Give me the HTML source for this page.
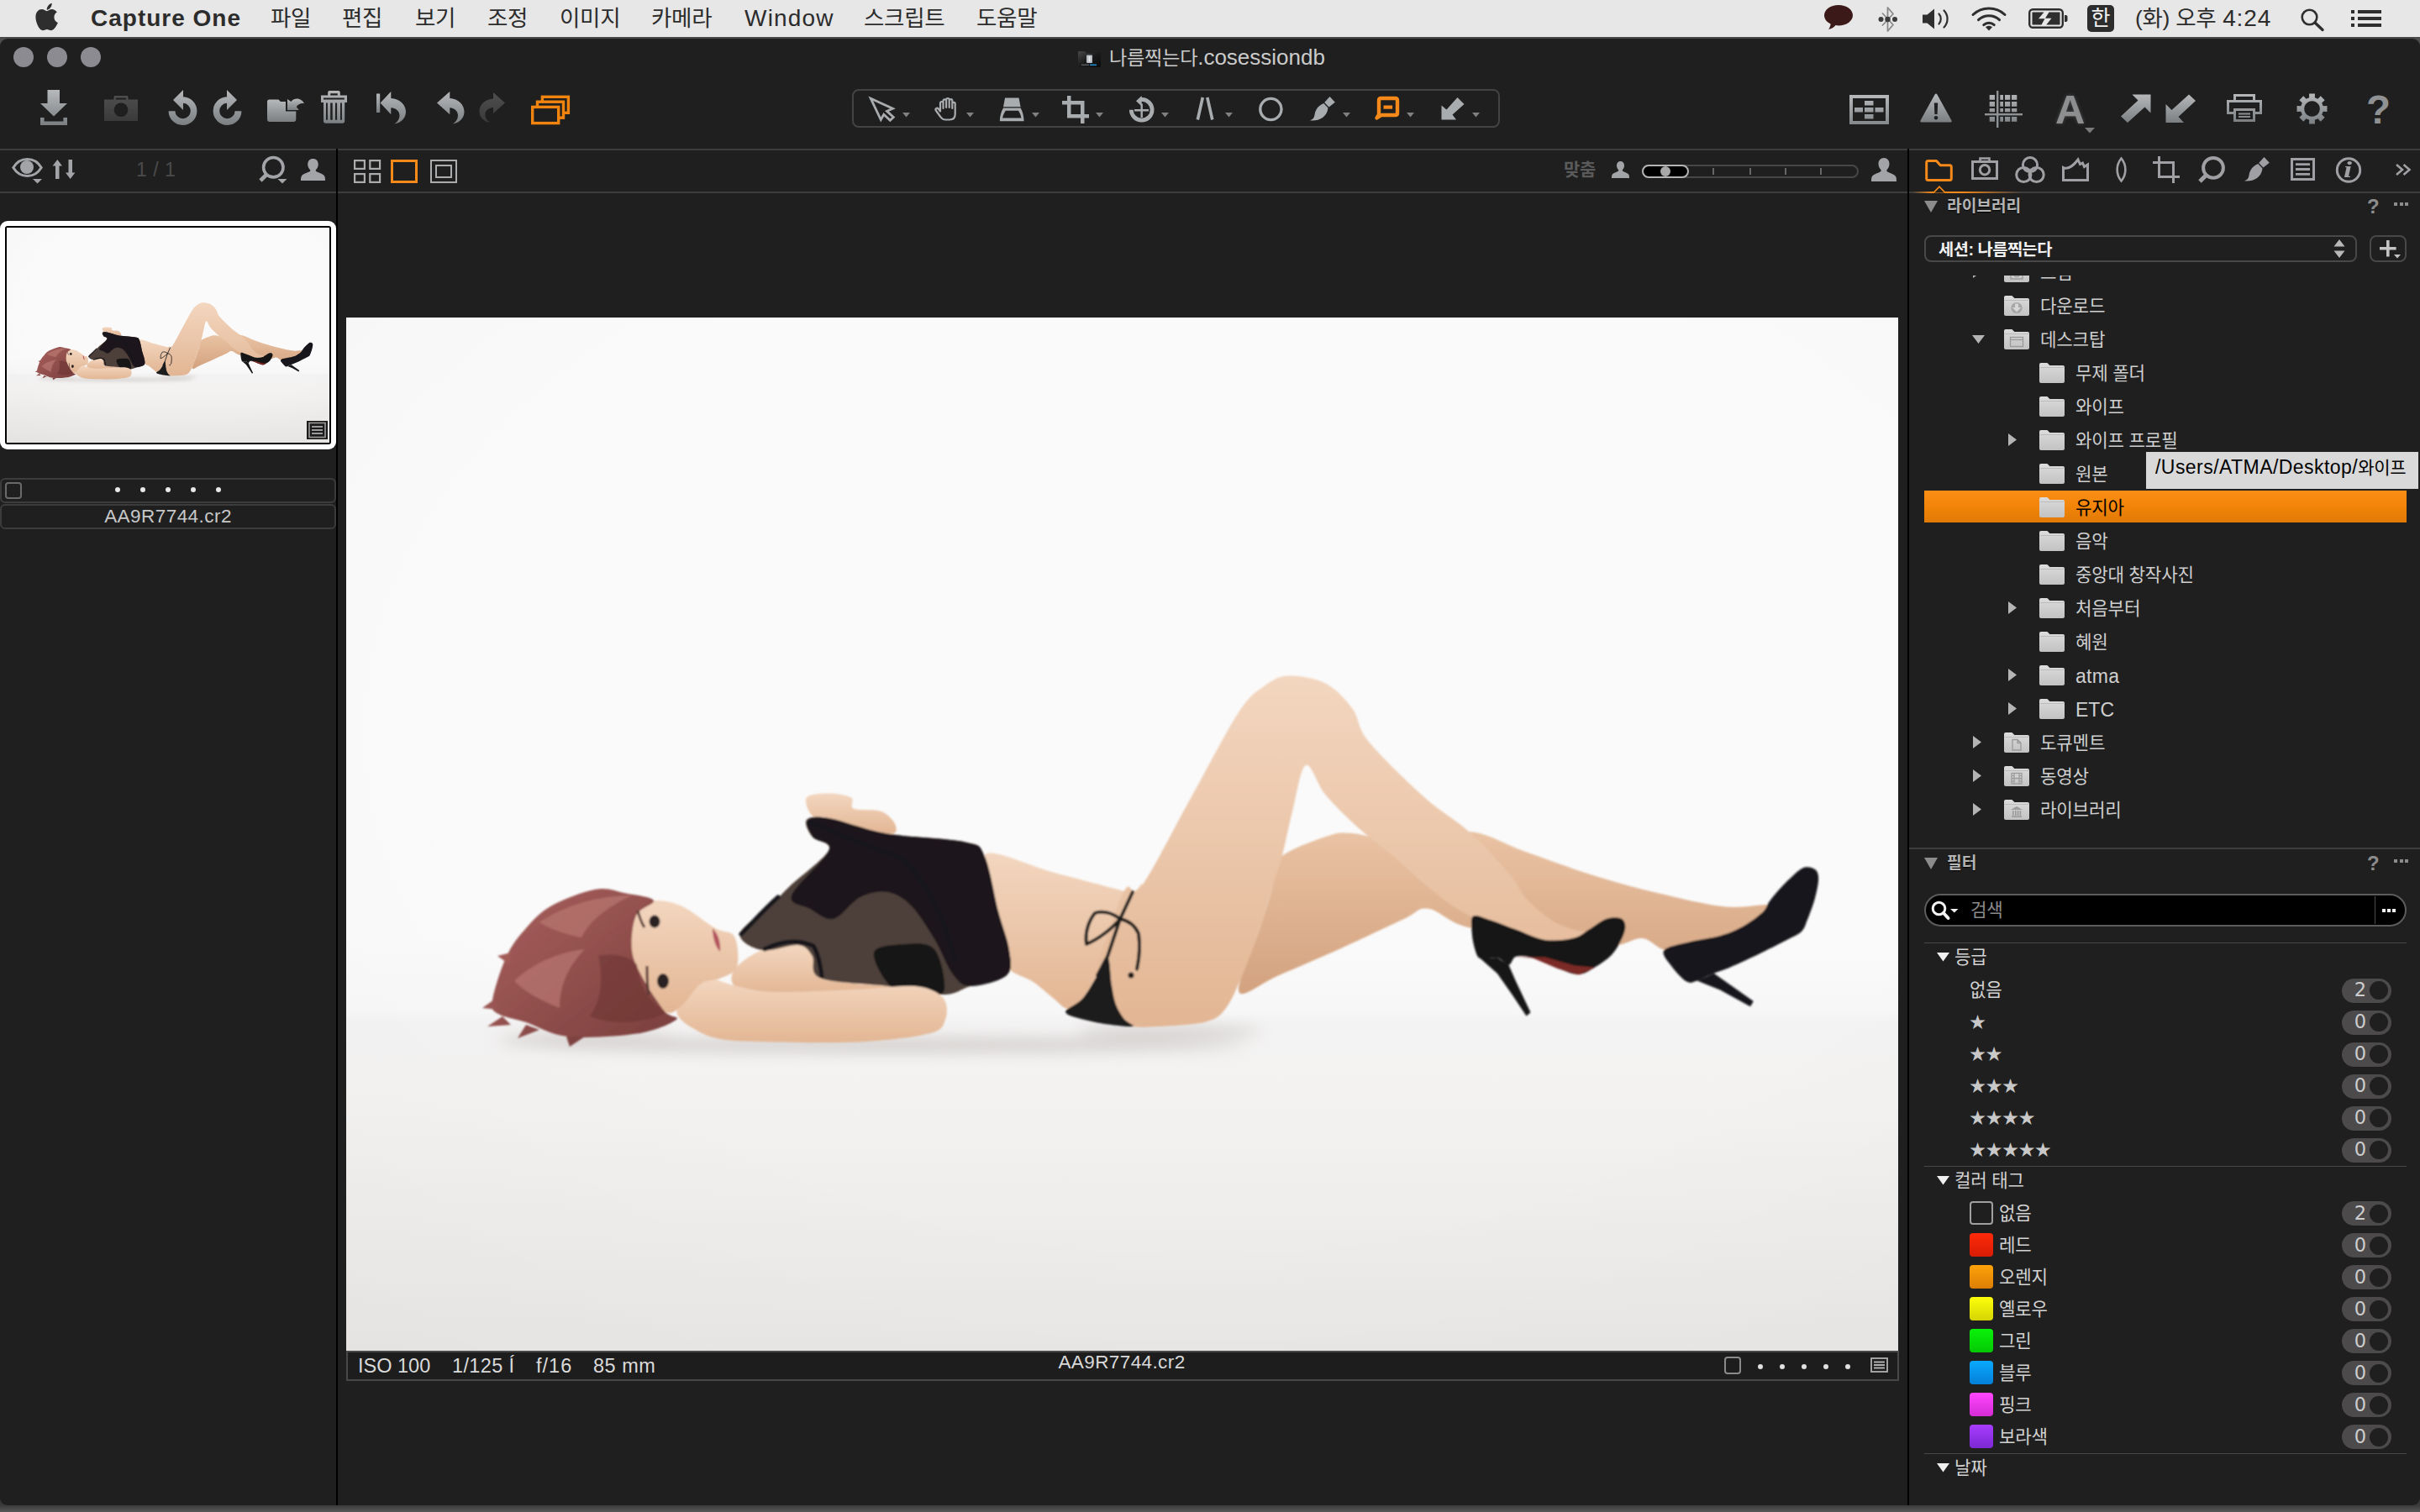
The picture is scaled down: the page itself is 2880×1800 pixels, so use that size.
<!DOCTYPE html>
<html lang="ko"><head><meta charset="utf-8"><title>Capture One</title>
<style>
*{box-sizing:border-box;margin:0;padding:0}
html,body{width:2880px;height:1800px;overflow:hidden}
body{background:#4d4d4d;font-family:"Liberation Sans","Noto Sans CJK KR",sans-serif;position:relative;color:#c8c8c8}
.abs{position:absolute}
#desk{position:absolute;left:0;top:1780px;width:2880px;height:20px;background:linear-gradient(#303030,#3a3a3a 60%,#585858)}
#menubar{position:absolute;left:0;top:0;width:2880px;height:44px;background:#e7e7e7;color:#2c2c2c}
#menubar .mi{position:absolute;top:0;height:44px;line-height:44px;font-size:28px;white-space:nowrap}
#menubar .k{font-size:26.5px;letter-spacing:-0.3px}
#mbline{position:absolute;left:0;top:44px;width:2880px;height:2px;background:#4a4a4a}
#win{position:absolute;left:0;top:46px;width:2880px;height:1746px;background:#1f1f1f;border-radius:9px;overflow:hidden}
.hl{position:absolute;height:2px;background:#3d3d3d}
.vl{position:absolute;width:2px;background:#000}
.tl{position:absolute;width:24px;height:24px;border-radius:12px;background:#8d8b92;top:10px}
svg{position:absolute;overflow:visible}
.t{position:absolute;white-space:nowrap}
</style></head>
<body>
<div id="desk"></div>
<div id="menubar">
<svg style="left:41.5px;top:2.5px" width="27.5" height="34" viewBox="0 0 26 32" preserveAspectRatio="none"><path fill="#2e2e2e" d="M13 9.6C11.5 9.6 9.8 7.6 7.2 7.6 3.6 7.6 .4 10.8 .4 16.2.4 22.6 4.6 31.2 8.4 31.2c1.8 0 2.6-1.2 4.8-1.2s2.8 1.2 4.7 1.2c3.3 0 6.3-5.6 7.5-8.6-2.6-1-4.2-3.4-4.2-6.2 0-2.4 1.2-4.4 3.2-5.6-1.4-2-3.6-3.2-5.8-3.2-2.4 0-4 2-5.6 2zM13 8.4C12.8 5.4 15.2 1.6 18.6.8 19 4 16.6 7.8 13 8.4z"/></svg>
<span class="mi" style="left:108px;font-weight:bold;letter-spacing:1px">Capture One</span>
<span class="mi k" style="left:322px">파일</span>
<span class="mi k" style="left:407px">편집</span>
<span class="mi k" style="left:494px">보기</span>
<span class="mi k" style="left:580px">조정</span>
<span class="mi k" style="left:666px">이미지</span>
<span class="mi k" style="left:775px">카메라</span>
<span class="mi" style="left:886px;letter-spacing:1.2px">Window</span>
<span class="mi k" style="left:1028px">스크립트</span>
<span class="mi k" style="left:1162px">도움말</span>
<svg style="left:2171px;top:6px" width="34" height="30" viewBox="0 0 34 30"><path fill="#3b1919" d="M17 0C7.6 0 0 5.4 0 12.2c0 4.3 3 8 7.6 10.2-.2 2.4-1.2 4.8-2.6 6.6 3.5-.5 6.6-2.2 8.6-4.9 1.1.2 2.2.3 3.4.3 9.4 0 17-5.4 17-12.2S26.4 0 17 0z"/></svg>
<svg style="left:2235px;top:7px" width="24" height="32" viewBox="0 0 24 32"><path fill="none" stroke="#8a8a8a" stroke-width="1.8" stroke-linejoin="round" d="M5 8.5L18 22.5 11.5 30V2L18 9.5 5 23.5"/><circle cx="3.5" cy="16" r="3" fill="#3c3c3c"/><circle cx="11.5" cy="16" r="3.2" fill="#3c3c3c"/><circle cx="20" cy="16" r="3" fill="#3c3c3c"/></svg>
<svg style="left:2288px;top:10px" width="34" height="25" viewBox="0 0 34 25"><path fill="#2e2e2e" d="M0 7.5h5.5L14 0.5v24L5.5 17.5H0z"/><path fill="none" stroke="#2e2e2e" stroke-width="2.2" stroke-linecap="round" d="M19.5 6.5c3 3.2 3 8.8 0 12M25.5 2.5c5.4 5.6 5.4 14.4 0 20"/></svg>
<svg style="left:2346px;top:7px" width="42" height="30" viewBox="0 0 42 30"><g fill="none" stroke="#2e2e2e" stroke-width="3" stroke-linecap="round"><path d="M2 10.5C12.5.5 29.5.5 40 10.5"/><path d="M8.5 16.7c7-6.6 18-6.6 25 0"/><path d="M14.8 22.7c3.6-3.3 8.8-3.3 12.4 0"/></g><path fill="#2e2e2e" d="M21 29.5l-4-4.3c2.3-2 5.7-2 8 0z"/></svg>
<svg style="left:2414px;top:10px" width="47" height="24" viewBox="0 0 47 24"><rect x="1.2" y="1.2" width="39.6" height="21.6" rx="4" fill="none" stroke="#2e2e2e" stroke-width="2.4"/><path fill="#2e2e2e" d="M43 8h1.5c1.2 0 2 .8 2 2v4c0 1.2-.8 2-2 2H43z"/><path fill="#2e2e2e" d="M4.5 4.5h14L12 12.3h7.5L15.5 19.5H4.5zM24.5 4.5h13v15H21.3l6.2-7.8H20z"/></svg>
<div class="abs" style="left:2484px;top:6px;width:32px;height:32px;border-radius:5px;background:#2c2c2c"></div><span class="t" style="left:2484px;top:6px;width:32px;height:32px;line-height:31px;text-align:center;color:#f2f2f2;font-size:25px;font-weight:400">한</span>
<span class="mi" style="left:2541px"><span style="font-size:26.5px;letter-spacing:-0.3px">(화) 오후</span> <span style="letter-spacing:0.9px">4:24</span></span>
<svg style="left:2738px;top:10px" width="28" height="27" viewBox="0 0 28 27"><circle cx="10.5" cy="10.5" r="8.8" fill="none" stroke="#2e2e2e" stroke-width="2.6"/><path stroke="#2e2e2e" stroke-width="3.4" stroke-linecap="round" d="M17 17l9 8.5"/></svg>
<svg style="left:2798px;top:12px" width="36" height="20" viewBox="0 0 36 20"><g fill="#2e2e2e"><rect x="0" y="0" width="4" height="4"/><rect x="8" y="0" width="28" height="4"/><rect x="0" y="8" width="4" height="4"/><rect x="8" y="8" width="28" height="4"/><rect x="0" y="16" width="4" height="4"/><rect x="8" y="16" width="28" height="4"/></g></svg>
</div>
<div id="mbline"></div>
<div id="win">
<svg width="0" height="0" style="left:0;top:0"><defs><linearGradient id="g" x1="0" y1="0" x2="0" y2="1"><stop offset="0" stop-color="#b6b8ba"/><stop offset="1" stop-color="#7b7f82"/></linearGradient><linearGradient id="gd" x1="0" y1="0" x2="0" y2="1"><stop offset="0" stop-color="#4e4e4e"/><stop offset="1" stop-color="#3a3a3a"/></linearGradient><linearGradient id="gf" x1="0" y1="0" x2="0" y2="1"><stop offset="0" stop-color="#dcdcdc"/><stop offset="1" stop-color="#c2c2c2"/></linearGradient><linearGradient id="gu" gradientUnits="userSpaceOnUse" x1="0" y1="0" x2="0" y2="42"><stop offset="0" stop-color="#b6b8ba"/><stop offset="1" stop-color="#7b7f82"/></linearGradient></defs></svg>
<div class="tl" style="left:16px"></div><div class="tl" style="left:56px"></div><div class="tl" style="left:96px"></div>
<svg style="left:1283px;top:14px" width="27" height="20" viewBox="0 0 27 20"><defs><linearGradient id="tf" x1="0" y1="0" x2="1" y2="1"><stop offset="0" stop-color="#4a4a4a"/><stop offset=".5" stop-color="#1a1a1a"/><stop offset="1" stop-color="#0c0c0c"/></linearGradient></defs><path fill="url(#tf)" d="M0 2.5c0-1 .6-1.5 1.5-1.5H8l2 2h15.5c1 0 1.5.6 1.5 1.5V18.5c0 1-.6 1.5-1.5 1.5h-24C.6 20 0 19.4 0 18.5z"/><rect x="10" y="5.5" width="7" height="9.5" rx="1" fill="#b8bcc2"/><rect x="12.5" y="7" width="2" height="6.5" fill="#e8eaee"/><rect x="4" y="16.5" width="9" height="1.6" fill="#55585c"/><rect x="14" y="16.5" width="8" height="1.6" fill="#1d8ac8"/></svg>
<span class="t" style="left:1320px;top:4px;height:36px;line-height:36px;font-size:26px;color:#cbcbcb"><span style="font-size:23.2px;letter-spacing:-0.3px">나름찍는다</span>.cosessiondb</span>
<svg width="0" height="0" style="left:0;top:0"><defs><linearGradient id="pbg" x1="0" y1="0" x2="0" y2="1"><stop offset="0" stop-color="#fafafa"/><stop offset="0.6" stop-color="#fafafa"/><stop offset="0.672" stop-color="#f7f7f7"/><stop offset="0.682" stop-color="#f4f3f3"/><stop offset="0.76" stop-color="#f3f2f1"/><stop offset="1" stop-color="#e9e7e6"/></linearGradient><radialGradient id="pvg" cx="0.55" cy="0.4" r="0.85"><stop offset="0.55" stop-color="#000" stop-opacity="0"/><stop offset="1" stop-color="#000" stop-opacity="0.02"/></radialGradient><linearGradient id="sk1" x1="0" y1="0" x2="0" y2="1"><stop offset="0" stop-color="#f3d6bf"/><stop offset="1" stop-color="#e2b694"/></linearGradient><linearGradient id="sk2" x1="0" y1="0" x2="0" y2="1"><stop offset="0" stop-color="#e9c3a4"/><stop offset="1" stop-color="#d3a27f"/></linearGradient><linearGradient id="hr" x1="0" y1="0" x2="1" y2="1"><stop offset="0" stop-color="#a9605c"/><stop offset="1" stop-color="#7a3f3d"/></linearGradient><filter id="pbl" x="-5%" y="-5%" width="110%" height="110%"><feGaussianBlur stdDeviation="0.9"/></filter><filter id="psh" x="-10%" y="-50%" width="120%" height="200%"><feGaussianBlur stdDeviation="9"/></filter><symbol id="ph" viewBox="0 0 1847 1230" preserveAspectRatio="none"><rect width="1847" height="1230" fill="url(#pbg)"/><rect width="1847" height="1230" fill="url(#pvg)"/><g filter="url(#psh)" fill="#b9b4b0" opacity="0.55"><ellipse cx="650" cy="866" rx="420" ry="9"/><ellipse cx="980" cy="850" rx="110" ry="7"/><ellipse cx="290" cy="860" rx="110" ry="8"/></g><g filter="url(#pbl)"><path fill="url(#sk2)" d="M1110 644C1120.6 633.7 1151.1 623 1165.7 618C1180.3 613 1181.7 612.8 1197.4 614C1213.1 615.2 1236.9 625.3 1260 625C1283.1 624.7 1312 610.2 1336 612C1360 613.8 1379.2 627.4 1403.7 636C1428.2 644.6 1456.5 655.5 1483 663.8C1509.5 672.1 1536 679.3 1562.4 685.6C1588.9 691.9 1618.6 699.2 1641.7 701.5C1664.8 703.8 1690.5 696.6 1701 699.5C1711.5 702.4 1711.6 710.4 1705 719C1698.4 727.6 1678.7 746.3 1661.5 751C1644.3 755.7 1617.2 746.7 1602 747C1586.8 747.3 1579.9 754.3 1570 753C1560.1 751.7 1553.1 740 1542.6 739C1532.1 738 1522.3 748.3 1507 747C1491.7 745.7 1478.8 734.3 1451 731C1423.2 727.7 1367.2 731.5 1340 727C1312.8 722.5 1301.6 705.6 1288 703.8C1274.4 702 1275.6 708.4 1258.3 716.2C1241 724.1 1208.7 739.7 1183.9 750.9C1159.1 762.1 1129.7 774.5 1109.5 783.2C1089.3 791.9 1066.4 811.7 1062.5 803C1058.6 794.3 1079.4 751.5 1086 731C1092.6 710.5 1098 694.2 1102 679.7C1106 665.2 1099.4 654.3 1110 644z"/><path fill="#17171a" d="M1694.6 693.9C1698.7 688.5 1703.7 682.5 1709.5 676.5C1715.3 670.5 1724.3 661.7 1729.3 658C1734.2 654.3 1735.9 654.2 1739.2 654.2C1742.5 654.2 1747.1 655.5 1749.2 658C1751.3 660.5 1752.3 663.5 1752.1 669.1C1751.9 674.7 1750.1 683.5 1747.9 691.4C1745.8 699.2 1741.9 709.6 1739.2 716.2C1736.5 722.8 1735.9 727 1731.8 731.1C1727.7 735.2 1722.3 736.9 1714.5 741C1706.7 745.1 1695.9 750.5 1684.7 755.9C1673.5 761.3 1657 769.1 1647.5 773.2C1638 777.3 1634.3 778 1627.7 780.7C1621.1 783.4 1613.2 787.8 1607.8 789.4C1602.4 791 1600.4 793.3 1595.4 790.6C1590.5 787.9 1582.6 779.4 1578.1 773.2C1573.6 767 1564.9 758.4 1568.2 753.4C1571.5 748.4 1586.8 746.4 1597.9 743.5C1609.1 740.6 1624.8 738.9 1635.1 736C1645.4 733.1 1651.6 730.6 1659.9 726.1C1668.2 721.6 1678.9 714.2 1684.7 708.8C1690.5 703.4 1690.5 699.3 1694.6 693.9z"/><path fill="#17171a" d="M1607.8 789.4L1627.7 780.7L1674.8 814.1L1671 820.3L1635.1 800.5z"/><path fill="url(#sk1)" d="M759.9 639.4C770 631.4 811.6 652.6 836.8 659.2C862 665.8 894.6 674.9 911.1 679C927.6 683.1 929.8 684.5 935.9 684C942 683.5 948.5 668.3 947.5 676C946.5 683.7 936.9 715.9 930 730C923.1 744.1 912.2 751.9 906.2 760.8C900.2 769.7 898.8 774.9 893.8 783.2C888.8 791.5 882.2 803.8 876.4 810.4C870.6 817 864.9 822.8 859.1 822.8C853.3 822.8 848.7 815.8 841.7 810.4C834.7 805 825.6 796.4 816.9 790.6C808.2 784.8 794.4 782 789.7 775.7C785.1 769.4 791.3 764.5 789 753C786.7 741.5 780.9 725.9 776 707C771.1 688.1 749.8 647.4 759.9 639.4z"/><path fill="url(#sk1)" d="M927.7 679.7C934.3 670.7 934.3 694.2 947.5 675.7C960.7 657.2 987.8 603 1007 568.6C1026.2 534.2 1048 491.2 1062.5 469.4C1077 447.6 1084.1 444.8 1094 437.7C1103.9 430.6 1110 426.9 1122 426.6C1134 426.3 1153.1 429.2 1165.7 435.7C1178.3 442.2 1188.9 453.9 1197.4 465.5C1206 477.1 1202.5 487.1 1217 505C1231.5 522.9 1264.9 554.8 1284.7 572.6C1304.5 590.4 1319.5 597.1 1336 612C1352.5 626.9 1372.6 648.7 1384 662C1395.4 675.3 1395.7 682.5 1404.5 692C1413.3 701.5 1426.5 712.7 1436.8 719C1447.1 725.3 1459.3 728.2 1466.5 730C1473.7 731.8 1480.9 728 1480 730C1479.1 732 1469.9 739.5 1461 742C1452.1 744.5 1438.3 746.7 1426.8 745C1415.3 743.3 1402.8 736.2 1392 732C1381.2 727.8 1370.5 723 1362 720C1353.5 717 1348.6 717.3 1341 714C1333.4 710.7 1325.8 706.4 1316.4 700C1307 693.6 1296.6 685.7 1284.7 675.7C1272.8 665.7 1258.3 651.3 1245 640C1231.7 628.7 1218.2 619.9 1205 608C1191.8 596.1 1176.2 581.1 1165.7 568.6C1155.2 556.1 1148.6 529.7 1142 533C1135.4 536.3 1130.7 570.6 1126 588.4C1121.3 606.2 1118 624.8 1114 640C1110 655.2 1106.7 664.5 1102 679.7C1097.3 694.9 1091.9 713.8 1086 731C1080.1 748.2 1073 767.5 1066.5 782.8C1060 798 1054 813.2 1046.7 822.5C1039.5 831.8 1036.3 834.8 1023 838.4C1009.7 842 981.7 843.1 967 844C952.3 844.9 942.8 845 935 844C927.2 843 925.3 845.3 920 838C914.7 830.7 907.5 809.7 903 800C898.5 790.3 892.2 791.7 893 780C893.8 768.3 902.2 746.7 908 730C913.8 713.3 921.1 688.8 927.7 679.7z"/><path fill="#1b1b1e" d="M859.1 822.8C862.4 819.9 870.6 817 876.4 810.4C882.2 803.8 888.8 791.5 893.8 783.2C898.8 774.9 903.3 758.7 906.2 760.8C909.1 762.9 909.5 786.1 911.1 795.6C912.8 805.1 913.6 811.3 916.1 817.9C918.6 824.5 922.7 830.9 926 835.2C929.3 839.5 940.4 843.1 935.9 843.9C931.4 844.7 910.4 842.1 898.8 840.2C887.2 838.4 873.5 834.9 866.5 832.8C859.5 830.7 857.8 829.5 856.6 827.8C855.4 826.1 855.8 825.7 859.1 822.8z"/><path fill="#141416" d="M1341.3 712.5C1345.1 710.2 1353.9 714.8 1362.4 717.5C1370.9 720.2 1381.4 724.7 1392.1 728.6C1402.8 732.5 1415.2 739.4 1426.8 741C1438.4 742.6 1452.9 740.6 1461.6 738.5C1470.3 736.4 1472.7 732.3 1478.9 728.6C1485.1 724.9 1492.5 718.5 1498.7 716.2C1504.9 713.9 1512.2 713.8 1516.1 715C1520 716.2 1521.9 719.8 1522.3 723.7C1522.7 727.6 1521.3 732.7 1518.6 738.5C1515.9 744.3 1511.6 752.6 1506.2 758.4C1500.8 764.2 1492.9 769.3 1486.3 773.2C1479.7 777.1 1473.9 781.7 1466.5 781.9C1459.1 782.1 1450.8 777.8 1441.7 774.5C1432.6 771.2 1420.3 764.4 1412 762.1C1403.7 759.8 1396.8 759.3 1392.1 760.8C1387.3 762.2 1387.2 770.6 1383.5 770.8C1379.8 771 1375.4 763.4 1369.8 762.1C1364.2 760.9 1354.5 765.2 1350 763.3C1345.5 761.4 1344.7 756.3 1343 750.9C1341.3 745.5 1339.9 737.5 1339.6 731.1C1339.3 724.7 1337.5 714.8 1341.3 712.5z"/><path fill="#141416" d="M1350 763.3L1369.8 762.1L1383.5 770.8L1392.1 790.6L1409.5 827.3L1404.5 831.5L1387.2 805.5L1369.8 780.7z"/><path fill="#7c2b26" d="M1392 761.5L1412 762.5 1441.7 775 1466.5 782.5 1486.3 773.8 1461.6 771.5 1426.8 761.5z"/><path fill="none" stroke="#1b1b1e" stroke-width="4" stroke-linecap="round" stroke-linejoin="round" d="M935.9 684L921 716.2M921 716c-10-8-22-10-30-7-8 10-12 24-10 37 14-6 30-18 40-30zM921 716c10 2 18 8 22 17.6 2 14 1 28-2 42M921 716l-15 44.8-12 22.4"/><circle cx="934" cy="783" r="3.5" fill="#1b1b1e"/><path fill="url(#sk1)" d="M548 571.6C551.3 567.2 565.7 566.6 574.5 566.6C583.3 566.6 596.1 568.6 601 571.6C605.9 574.6 598 582.1 604 584.8C610 587.5 628.7 584.7 637 588C645.3 591.3 652.6 600.2 653.8 604.6C655 609 657.2 616 644 614.6C630.8 613.2 589.4 599.6 574.5 596C559.6 592.4 559 597.1 554.6 593C550.2 588.9 544.7 576 548 571.6z"/><path fill="url(#sk1)" d="M462 776.5C467 769 482.3 757.9 495 753C507.7 748.1 527.5 745.8 538 747C548.5 748.2 553.6 753.4 558 760C562.4 766.6 550.2 780.5 564.5 786.5C578.8 792.5 620.3 793.2 644 796C667.7 798.8 701.1 802.3 706.6 803C712.1 803.7 709.5 799.5 677 800C644.5 800.5 546.9 806.3 511.6 806C476.3 805.7 473.3 802.9 465 798C456.7 793.1 457 784 462 776.5z"/><path fill="#dcb395" d="M548 598C551.3 594.3 558.5 593.2 574.5 596C590.5 598.8 617 609.9 644 614.6C671 619.4 717.1 620.1 736.4 624.5C755.7 628.9 753 627.2 759.6 641C766.2 654.8 771.1 688.3 776 707C780.9 725.7 787.3 740.3 789 753C790.7 765.7 793.7 775.8 786 783C778.3 790.2 755.7 792.2 743 796C730.3 799.8 726.5 806 710 806C693.5 806 668.2 799.2 644 796C619.8 792.8 579.4 792.5 564.5 786.5C549.6 780.5 559 766.6 554.6 760C550.2 753.4 547.9 748.2 538 747C528.1 745.8 506.6 755.2 495 753C483.4 750.8 467 742.4 468.7 733.6C470.4 724.9 495.1 709.9 505 700.5C514.9 691.1 516.4 688.1 528 677C539.6 665.9 570.1 643.8 574.5 634C578.9 624.2 559 624 554.6 618C550.2 612 544.7 601.7 548 598z"/><path fill="#1c1a1b" opacity="0.74" d="M548 598C551.3 594.3 558.5 593.2 574.5 596C590.5 598.8 617 609.9 644 614.6C671 619.4 717.1 620.1 736.4 624.5C755.7 628.9 753 627.2 759.6 641C766.2 654.8 771.1 688.3 776 707C780.9 725.7 787.3 740.3 789 753C790.7 765.7 793.7 775.8 786 783C778.3 790.2 755.7 792.2 743 796C730.3 799.8 726.5 806 710 806C693.5 806 668.2 799.2 644 796C619.8 792.8 579.4 792.5 564.5 786.5C549.6 780.5 559 766.6 554.6 760C550.2 753.4 547.9 748.2 538 747C528.1 745.8 506.6 755.2 495 753C483.4 750.8 467 742.4 468.7 733.6C470.4 724.9 495.1 709.9 505 700.5C514.9 691.1 516.4 688.1 528 677C539.6 665.9 570.1 643.8 574.5 634C578.9 624.2 559 624 554.6 618C550.2 612 544.7 601.7 548 598z"/><path fill="#17161a" opacity="0.93" d="M574.5 634C578.8 622.5 560.2 624.8 556 619C551.8 613.2 545.9 602.8 549 599C552.1 595.2 558.7 593.4 574.5 596C590.3 598.6 617 609.9 644 614.6C671 619.4 717.1 620.1 736.4 624.5C755.7 628.9 753 627.2 759.6 641C766.2 654.8 771.1 688.3 776 707C780.9 725.7 787.3 740.3 789 753C790.7 765.7 793.7 775.8 786 783C778.3 790.2 753.7 796.2 743 796C732.3 795.8 729.2 791.3 722 782C714.8 772.7 708.3 753.7 700 740C691.7 726.3 681.3 709.3 672 700C662.7 690.7 654 685.7 644 684C634 682.3 622.7 684.7 612 690C601.3 695.3 590 713.7 580 716C570 718.3 560.3 708.7 552 704C543.7 699.3 526.2 699.7 530 688C533.8 676.3 570.2 645.5 574.5 634z"/><path fill="#151417" d="M628 756C630.3 747.3 652 746.7 664 746C676 745.3 692 743 700 752C708 761 713.7 791.2 712 800C710.3 808.8 700.3 805.3 690 805C679.7 804.7 660.3 806.2 650 798C639.7 789.8 625.7 764.7 628 756z"/><path fill="none" stroke="#17161a" stroke-width="5" stroke-linecap="round" d="M470 734c14-14 28-30 44-44M498 752c20-10 40-12 58-4 6 10 8 22 10 36M552 600c30 14 70 30 110 44 30 30 50 70 62 120"/><path fill="url(#sk1)" d="M399 813C402.1 806.9 407 797.4 412.5 793C418 788.6 423.2 786 432 786.5C440.8 787 451.7 793.2 465 796C478.3 798.8 487.3 802.4 511.6 803C535.9 803.6 583.4 800.9 611 799.7C638.6 798.5 660.5 794.4 677 796C693.5 797.6 704 802.9 710 809.6C716 816.3 715.8 828.8 713 836C710.2 843.2 710.5 848.2 693.5 852.6C676.5 857 641.3 860.9 611 862.5C580.7 864.1 539.2 863.1 511.6 862.5C484 861.9 462 861.8 445.5 859C429 856.2 421.1 850.9 412.5 846C403.9 841.1 396.2 834.9 394 829.4C391.8 823.9 395.9 819.1 399 813z"/><path fill="url(#sk1)" d="M336 700.5C341.5 690.7 355.5 694 366 694C376.5 694 386.8 695 399 700.5C411.2 706 428.5 720.9 439 727C449.5 733.1 457.7 729.3 462 737C466.3 744.7 467.8 764.8 465 773C462.2 781.2 452.7 783.2 445.5 786.5C438.3 789.8 429.8 787.5 422 793C414.2 798.5 406.2 814 399 819.5C391.8 825 386.7 831.5 379 826C371.3 820.5 360.7 798.7 353 786.5C345.3 774.3 335.8 767.3 333 753C330.2 738.7 330.5 710.3 336 700.5z"/><path fill="url(#hr)" d="M174 813C175.7 801.5 184.3 774.3 191 760C197.7 745.7 205.2 736.9 214 727C222.8 717.1 230.2 708.2 244 700.5C257.8 692.8 282.2 683.2 297 680.7C311.8 678.2 321.5 683.4 333 685.6C344.5 687.8 364 689.6 366 694C368 698.4 349.3 702.2 345 712C340.7 721.8 338.7 740.6 340 753C341.3 765.4 346.5 774.3 353 786.5C359.5 798.7 372.4 817.8 379 826C385.6 834.2 398.1 831.6 392.6 836C387.1 840.4 367.5 849.3 346 852.6C324.5 855.9 285.7 858.3 263.7 856C241.7 853.7 227.8 843.5 214 839C200.2 834.5 187.7 833.3 181 829C174.3 824.7 172.3 824.5 174 813z"/><path fill="#b97872" opacity="0.7" d="M230 720c30-20 70-32 110-32-30 14-50 30-60 50-20-4-36-10-50-18zM200 790c20-20 50-34 84-38-20 20-30 44-30 70-20-8-40-18-54-32z"/><path fill="#6d3532" opacity="0.6" d="M300 760c20-4 36 0 46 10 2 24 14 44 34 58-30 14-64 14-90 4 14-20 16-46 10-72z"/><path fill="url(#hr)" d="M176 812l-14 10 20 2zM186 832l-18 12 28-2zM214 842l-10 16 26-10zM262 856l4 12 18-12zM196 756l-16 4 14 10z"/><ellipse cx="367" cy="719" rx="6.5" ry="7.5" fill="#2a2422"/><ellipse cx="377" cy="790" rx="7" ry="9" fill="#2a2422"/><path fill="#b3545e" d="M436 727c6 6 10 16 9 28-6-6-9-18-9-28z"/><path stroke="#5a3a34" stroke-width="3" fill="none" d="M347 706c2 8 4 14 8 20M358 772c0 12 0 24 2 34"/></g></symbol></defs></svg>
<svg style="left:48px;top:61px" width="32" height="42" viewBox="0 0 32 42"><path fill="url(#g)" d="M8.5 0h14.5v16H32L16 31.5 0 16h8.5zM0 33h4.6v4.5h22.8V33H32v9H0z"/></svg>
<svg style="left:124px;top:68px" width="40" height="30" viewBox="0 0 40 30"><path fill="url(#gd)" fill-rule="evenodd" d="M0 4.5h11.5V1.5c0-.8.7-1.5 1.5-1.5h14c.8 0 1.5.7 1.5 1.5v3H40V30H0zM14 2.5v2h12v-2zM20 8.5a8.3 8.3 0 1 0 .01 0z"/></svg>
<svg style="left:200px;top:61px" width="36" height="42" viewBox="0 0 36 42"><path fill="url(#g)" d="M18 0v8.2A16.9 16.9 0 1 1 .6 25.2h7.8A9.2 9.2 0 1 0 18 15.8V24L6 12z"/></svg>
<svg style="left:252px;top:61px" width="36" height="42" viewBox="0 0 36 42"><path fill="url(#g)" transform="translate(36,0) scale(-1,1)" d="M18 0v8.2A16.9 16.9 0 1 1 .6 25.2h7.8A9.2 9.2 0 1 0 18 15.8V24L6 12z"/></svg>
<svg style="left:318px;top:68px" width="45" height="31" viewBox="0 0 45 31"><path fill="url(#g)" d="M0 7c0-1.5 1-2.4 2.5-2.4H13.4L16 7h6V18.5H34.3V28c0 1.8-1.2 3-3 3H3c-1.8 0-3-1.2-3-3z"/><path fill="url(#g)" d="M24 4V17H37.9L34.7 13.3C36.5 10.5 40 8.5 44 9.2 42 4.5 34 .5 28.4 7z"/></svg>
<svg style="left:382px;top:62px" width="32" height="40" viewBox="0 0 32 40"><path fill="url(#g)" fill-rule="evenodd" d="M8.2 2c0-1.2.8-2 2-2h10.6c1.2 0 2 .8 2 2v3.4H31V14H28.2V36.3c0 1.5-1 2.5-2.5 2.5H5.5c-1.5 0-2.5-1-2.5-2.5V14H0V5.4h8.2zM11.2 3.2v2.2h8.6V3.2zM3 8.6v2h24.8v-2zM6 14.5V34.7h1.9V14.5zM11.2 14.5V34.7h2.5V14.5zM17 14.5V34.7h2.1V14.5zM23 14.5V34.7h1.9V14.5z"/></svg>
<svg style="left:448px;top:63px" width="35" height="39" viewBox="0 0 35 39"><rect x="0" y="2.5" width="4.2" height="22.5" fill="url(#g)"/><path fill="url(#g)" d="M4.6 13.6L17.3 0v8c10 .5 17.7 7.5 17.7 16 0 7.5-5.5 13-13.5 14.5 4.2-3 6-6.3 6-10 0-5-4-8.8-10.2-9.3V27.3z"/></svg>
<svg style="left:520px;top:63px" width="33" height="39" viewBox="0 0 33 39"><path fill="url(#g)" d="M0 13.6L15.3 0v8C25 8.5 32.5 15.5 32.5 24c0 7.5-5.5 13-13.5 14.5 4.2-3 6-6.3 6-10 0-5-3.8-8.8-9.7-9.3V27.3z"/></svg>
<svg style="left:570px;top:64px" width="31" height="36" viewBox="0 0 31 36"><path fill="url(#gd)" transform="translate(31,0) scale(-1,1)" d="M0 12.5L14 0v7.5C23.5 8 30.5 14.5 30.5 22.5c0 7-5 12-12.5 13.3 4-2.8 5.6-5.8 5.6-9.3 0-4.6-3.6-8-9.6-8.5V25z"/></svg>
<svg style="left:632px;top:67px" width="47" height="36" viewBox="0 0 47 36"><g fill="#1f1f1f" stroke="#f0840f" stroke-width="3.4"><rect x="13.4" y="2.3" width="31" height="19"/><rect x="7.5" y="8.2" width="31" height="19"/><rect x="1.7" y="14.4" width="31" height="19.2"/></g></svg>
<div class="abs" style="left:1014px;top:60px;width:771px;height:46px;border:2px solid #434343;border-radius:8px"></div>
<svg style="left:1034px;top:69px" width="32" height="30" viewBox="0 0 32 30"><path fill="none" stroke="#a9acae" stroke-width="2.8" stroke-linejoin="miter" d="M2.3 2.3L28.5 14.2 21.5 17.3 29.3 24.5 25.3 28.3 17.8 21.3 14.3 27.5z"/></svg><svg style="left:1074px;top:87.5px" width="9" height="5.5" viewBox="0 0 9 5.5"><path fill="#808080" d="M0 0h9L4.5 5.5z"/></svg>
<svg style="left:1112px;top:70px" width="28" height="28" viewBox="0 0 28 28"><path fill="none" stroke="#a9acae" stroke-width="2.2" stroke-linejoin="round" stroke-linecap="round" d="M10.5 13V4.2c0-2.4 3.6-2.4 3.6 0V12M14.1 11V2.8c0-2.4 3.6-2.4 3.6 0V12M17.7 11.5V4c0-2.4 3.6-2.4 3.6 0V13M21.3 13V7.5c0-2.3 3.4-2.3 3.4 0V20c0 4-2.5 6.5-6.5 6.5h-5c-3 0-4.5-1.3-6-3.5L1.8 15.5c-1.3-2 1.3-3.8 2.9-2L7 16.5V13M7 16.5V6.8c0-2.4 3.5-2.4 3.5 0"/></svg><svg style="left:1150px;top:87.5px" width="9" height="5.5" viewBox="0 0 9 5.5"><path fill="#808080" d="M0 0h9L4.5 5.5z"/></svg>
<svg style="left:1189px;top:70px" width="31" height="29" viewBox="0 0 31 29"><path fill="#a9acae" d="M7 .5h16.5l2.1 10.8H5z"/><path fill="#a9acae" fill-rule="evenodd" d="M5 12.4h20.6c2.6 4.5 3.8 10 4 15.9H.8c.2-5.9 1.5-11.4 4.2-15.9zM7.8 15.7c-1.9 2.8-3.2 5.8-3.7 8.8h22.3c-.5-3-1.5-6-3.4-8.8z"/></svg><svg style="left:1228px;top:87.5px" width="9" height="5.5" viewBox="0 0 9 5.5"><path fill="#808080" d="M0 0h9L4.5 5.5z"/></svg>
<svg style="left:1264px;top:68px" width="32" height="33" viewBox="0 0 32 33"><path fill="#a9acae" d="M6 0h4.5v6H26.5v16H32v4.5H26.5V33H22V26.5H6V10.5H0V6h6zM10.5 10.5V22H22V10.5z"/></svg><svg style="left:1304px;top:87.5px" width="9" height="5.5" viewBox="0 0 9 5.5"><path fill="#808080" d="M0 0h9L4.5 5.5z"/></svg>
<svg style="left:1343px;top:68px" width="31" height="32" viewBox="0 0 31 32"><path fill="#a9acae" d="M15.7 0V1.9A14.8 14.8 0 1 1 .9 16.7H5.7A10 10 0 1 0 15.7 6.7V12.4L9 6.2z"/><path fill="#a9acae" d="M14.5 9.5h2.4v6.6H24v2.4H16.9V26h-2.4V18.5H7V16.1h7.5z"/></svg><svg style="left:1382px;top:87.5px" width="9" height="5.5" viewBox="0 0 9 5.5"><path fill="#808080" d="M0 0h9L4.5 5.5z"/></svg>
<svg style="left:1423px;top:70px" width="22" height="27" viewBox="0 0 22 27"><path fill="none" stroke="#a9acae" stroke-width="3.6" d="M8.3 0L2.3 26.5M13.8 0L19.8 26.5"/></svg><svg style="left:1458px;top:87.5px" width="9" height="5.5" viewBox="0 0 9 5.5"><path fill="#808080" d="M0 0h9L4.5 5.5z"/></svg>
<svg style="left:1497px;top:69px" width="30" height="30" viewBox="0 0 30 30"><circle cx="15.4" cy="15" r="12.6" fill="none" stroke="#a9acae" stroke-width="3.4"/></svg>
<svg style="left:1559px;top:69px" width="30" height="29" viewBox="0 0 30 29"><path fill="#a9acae" d="M23.5 0L29.8 6.8 22.5 12.5 17.2 7z"/><path fill="#a9acae" d="M16.3 8l5.2 5.5c-.5 5-3 9-6.5 11.5-4.5 3.2-9.8 4-15 3.3 3.5-1 5-3 5.5-6.5.8-5.5 3.5-10.5 10.8-13.8z"/></svg><svg style="left:1598px;top:87.5px" width="9" height="5.5" viewBox="0 0 9 5.5"><path fill="#808080" d="M0 0h9L4.5 5.5z"/></svg>
<svg style="left:1636px;top:68px" width="30" height="30" viewBox="0 0 30 30"><path fill="none" stroke="#f58a1a" stroke-width="4.4" stroke-linejoin="round" d="M7.5 3h17c1.5 0 2.5 1 2.5 2.5v15c0 1.5-1 2.5-2.5 2.5H8L2.5 26.5 5 22.5V5.5C5 4 6 3 7.5 3z"/><rect x="10.5" y="11.5" width="10.6" height="4.2" fill="#f58a1a"/></svg><svg style="left:1674px;top:87.5px" width="9" height="5.5" viewBox="0 0 9 5.5"><path fill="#808080" d="M0 0h9L4.5 5.5z"/></svg>
<svg style="left:1715px;top:70px" width="28" height="27" viewBox="0 0 28 27"><path fill="#a9acae" d="M19.5 0L27.5 8 13.5 20.5 18 26.5H0.5V9.5L6.5 14.5z"/></svg><svg style="left:1752px;top:87.5px" width="9" height="5.5" viewBox="0 0 9 5.5"><path fill="#808080" d="M0 0h9L4.5 5.5z"/></svg>
<svg style="left:2201px;top:67px" width="47" height="35" viewBox="0 0 47 35"><rect x="2" y="2" width="43" height="31" fill="none" stroke="url(#gu)" stroke-width="4"/><g fill="url(#gu)"><rect x="18" y="7" width="10.5" height="5.5"/><rect x="18" y="15" width="10.5" height="5.5"/><rect x="18" y="23" width="10.5" height="5.5"/><rect x="6" y="15" width="10" height="5.5"/><rect x="30.5" y="15" width="10" height="5.5"/></g></svg>
<svg style="left:2285px;top:65px" width="38" height="35" viewBox="0 0 38 35"><path fill="url(#g)" fill-rule="evenodd" d="M19 .5c.6 0 1 .3 1.4 1L37.5 32.5c.5 1-.2 2-1.2 2H1.7c-1 0-1.7-1-1.2-2L17.6 1.5c.4-.7.8-1 1.4-1zM16.8 11.5l.6 13.5h3.2l.6-13.5zM19 27a2.3 2.3 0 1 0 .01 0z"/></svg>
<svg style="left:2362px;top:62px" width="45" height="44" viewBox="0 0 45 44"><g fill="url(#gu)"><rect x="5.7" y="5" width="6.3" height="5.8"/><rect x="5.7" y="13" width="6.3" height="5.8"/><rect x="5.7" y="21" width="6.3" height="4.3"/><rect x="5.7" y="31" width="6.3" height="5.8"/><rect x="18.3" y="5" width="3.7" height="5.8"/><rect x="18.3" y="13" width="3.7" height="5.8"/><rect x="18.3" y="21" width="3.7" height="4.3"/><rect x="18.3" y="31" width="3.7" height="5.8"/><rect x="24" y="5" width="6.3" height="5.8"/><rect x="24" y="13" width="6.3" height="5.8"/><rect x="24" y="21" width="6.3" height="4.3"/><rect x="24" y="31" width="6.3" height="5.8"/><rect x="32" y="5" width="6.3" height="5.8"/><rect x="32" y="13" width="6.3" height="5.8"/><rect x="32" y="21" width="6.3" height="4.3"/><rect x="32" y="31" width="6.3" height="5.8"/></g><rect x="14" y="0" width="2.4" height="44" fill="#8f9294"/><rect x="0" y="27" width="45" height="2.4" fill="#8f9294"/></svg>
<span class="t" style="left:2446px;top:56px;font-size:49px;font-weight:bold;line-height:56px;height:56px;color:#8c8e90;text-shadow:0 0 4px rgba(140,140,140,.45)">A</span><svg style="left:2481px;top:106px" width="12" height="6.5" viewBox="0 0 12 6.5"><path fill="#7a7a7a" d="M0 0h12L6 6.5z"/></svg>
<svg style="left:2524px;top:66px" width="36" height="34" viewBox="0 0 36 34"><path fill="url(#g)" d="M13.5 .5H35.5V22.5L28.5 15.5 8 34 0 26.5 20.5 7.5z"/></svg>
<svg style="left:2577px;top:66px" width="36" height="34" viewBox="0 0 36 34"><path fill="url(#g)" d="M22 34H.5V12L7.5 19 28 .5 36 8 15.5 27z"/></svg>
<svg style="left:2650px;top:66px" width="42" height="33" viewBox="0 0 42 33"><path fill="url(#g)" fill-rule="evenodd" d="M8 0h26v7h8v17h-8v9H8v-9H0V7h8zM11 3v4h20V3zM3 10v11h5v-4h26v4h5V10zM11 20v10h20V20zM14 22.5h14v2H14zM14 26h14v2H14z"/></svg>
<svg style="left:2733px;top:65px" width="37" height="37" viewBox="0 0 37 37"><path fill="url(#g)" fill-rule="evenodd" d="M15.14 5.32 L15.04 0.53 L21.96 0.53 L21.86 5.32 L25.44 6.8 L28.76 3.35 L33.65 8.24 L30.2 11.56 L31.68 15.14 L36.47 15.04 L36.47 21.96 L31.68 21.86 L30.2 25.44 L33.65 28.76 L28.76 33.65 L25.44 30.2 L21.86 31.68 L21.96 36.47 L15.04 36.47 L15.14 31.68 L11.56 30.2 L8.24 33.65 L3.35 28.76 L6.8 25.44 L5.32 21.86 L0.53 21.96 L0.53 15.04 L5.32 15.14 L6.8 11.56 L3.35 8.24 L8.24 3.35 L11.56 6.8z M18.5 9.2a9.3 9.3 0 1 0 .01 0z"/></svg>
<span class="t" style="left:2816px;top:57px;font-size:47.5px;font-weight:bold;line-height:56px;height:56px;color:#8f9193">?</span>
<div class="hl" style="left:0;top:131px;width:2880px"></div>
<div class="hl" style="left:0;top:182px;width:2880px"></div>
<div class="vl" style="left:400px;top:131px;height:1615px"></div>
<div class="vl" style="left:2270px;top:131px;height:1615px"></div>
<svg style="left:14px;top:142px" width="37" height="23" viewBox="0 0 37 23"><path fill="none" stroke="#a2a4a7" stroke-width="3" d="M1.8 11.5C6 4.5 12 1.5 18.5 1.5S31 4.5 35.2 11.5C31 18.5 25 21.5 18.5 21.5S6 18.5 1.8 11.5z"/><circle cx="18" cy="11" r="8" fill="#a2a4a7"/></svg><svg style="left:39px;top:167px" width="11" height="5.5" viewBox="0 0 11 5.5"><path fill="#a2a4a7" d="M0 0h11L5.5 5.5z"/></svg>
<svg style="left:62px;top:144px" width="28" height="23" viewBox="0 0 28 23"><path fill="#a2a4a7" d="M6.3 0L12 7.5H8.5V23H4V7.5H.6zM21.7 23L16 15.5h3.5V0H24v15.5h3.4z"/></svg>
<span class="t" style="left:162px;top:139px;height:34px;line-height:34px;font-size:23px;color:#4b4b4b;letter-spacing:0;word-spacing:1px">1 / 1</span>
<svg style="left:308px;top:139px" width="36" height="34" viewBox="0 0 36 34"><circle cx="17.3" cy="14.2" r="11.7" fill="none" stroke="#a2a4a7" stroke-width="3.6"/><path stroke="#a2a4a7" stroke-width="4.6" d="M9.5 22.5L2 30"/><path fill="#a2a4a7" d="M22.5 28h11L28 33.5z"/></svg>
<svg style="left:358px;top:143px" width="29" height="26" viewBox="0 0 30 27" preserveAspectRatio="none"><path fill="#a2a4a7" d="M15 0c4 0 6.5 2.8 6.5 6.8 0 2.8-1.2 5.2-2.8 6.7-.5.5-.5 1.8.2 2.2 3.5 2 9 3 10.5 6.3.5 1.2.6 3 .6 5H0c0-2 .1-3.8.6-5 1.5-3.3 7-4.3 10.5-6.3.700-.4.7-1.7.2-2.2C9.7 12 8.5 9.6 8.5 6.8 8.5 2.8 11 0 15 0z"/></svg>
<svg style="left:421px;top:144px" width="33" height="28" viewBox="0 0 33 28"><g fill="none" stroke="#aaacae" stroke-width="2.2"><rect x="1.1" y="1.1" width="11.8" height="9.8"/><rect x="19.3" y="1.1" width="11.8" height="9.8"/><rect x="1.1" y="17.1" width="11.8" height="9.8"/><rect x="19.3" y="17.1" width="11.8" height="9.8"/></g></svg>
<div class="abs" style="left:465px;top:144px;width:32px;height:28px;border:3px solid #f58a1a"></div>
<div class="abs" style="left:512px;top:144px;width:32px;height:28px;border:2px solid #aaacae"></div><div class="abs" style="left:518px;top:150px;width:20px;height:16px;border:2px solid #aaacae"></div>
<span class="t" style="left:1861px;top:138px;height:36px;line-height:36px;font-size:21px;font-weight:700;color:#5a5a5a;letter-spacing:-0.3px">맞춤</span>
<svg style="left:1918px;top:146px" width="21" height="20" viewBox="0 0 30 27" preserveAspectRatio="none"><path fill="#a2a4a7" d="M15 0c4 0 6.5 2.8 6.5 6.8 0 2.8-1.2 5.2-2.8 6.7-.5.5-.5 1.8.2 2.2 3.5 2 9 3 10.5 6.3.5 1.2.6 3 .6 5H0c0-2 .1-3.8.6-5 1.5-3.3 7-4.3 10.5-6.3.700-.4.7-1.7.2-2.2C9.7 12 8.5 9.6 8.5 6.8 8.5 2.8 11 0 15 0z"/></svg>
<div class="abs" style="left:1954px;top:150px;width:258px;height:16px;border:2px solid #474747;border-radius:8px"></div>
<div class="abs" style="left:2038px;top:154px;width:2px;height:8px;background:#666"></div><div class="abs" style="left:2082px;top:154px;width:2px;height:8px;background:#666"></div><div class="abs" style="left:2124px;top:154px;width:2px;height:8px;background:#666"></div><div class="abs" style="left:2166px;top:154px;width:2px;height:8px;background:#666"></div>
<div class="abs" style="left:1954px;top:150px;width:56px;height:16px;border:2px solid #b4b4b4;border-radius:8px;background:#000"></div><div class="abs" style="left:1976px;top:152px;width:12px;height:12px;border-radius:6px;background:#a8a8a8"></div>
<svg style="left:2227px;top:142px" width="30" height="28" viewBox="0 0 30 27" preserveAspectRatio="none"><path fill="#a2a4a7" d="M15 0c4 0 6.5 2.8 6.5 6.8 0 2.8-1.2 5.2-2.8 6.7-.5.5-.5 1.8.2 2.2 3.5 2 9 3 10.5 6.3.5 1.2.6 3 .6 5H0c0-2 .1-3.8.6-5 1.5-3.3 7-4.3 10.5-6.3.700-.4.7-1.7.2-2.2C9.7 12 8.5 9.6 8.5 6.8 8.5 2.8 11 0 15 0z"/></svg>
<div class="abs" style="left:0;top:217px;width:400px;height:272px;background:#fff;border-radius:9px"></div>
<div id="thumb" class="abs" style="left:6px;top:223px;width:388px;height:260px;border:2px solid #000;border-radius:3px;overflow:hidden;background:#fbfbfb"><svg style="left:0;top:0" width="384" height="257" viewBox="0 0 1847 1230" preserveAspectRatio="none"><use href="#ph" width="1847" height="1230"/></svg></div>
<svg style="left:365px;top:455px" width="25" height="22" viewBox="0 0 25 22"><rect x="0" y="0" width="25" height="22" fill="#1b1b1b"/><rect x="3" y="2.5" width="19" height="17" fill="none" stroke="#9a9a9a" stroke-width="1.6"/><path stroke="#9a9a9a" stroke-width="1.8" d="M6 7h13M6 11h13M6 15h13"/></svg>
<div class="abs" style="left:0;top:523px;width:400px;height:30px;border:2px solid #3c3c3c;border-radius:6px"></div>
<div class="abs" style="left:6px;top:528px;width:20px;height:20px;border:2px solid #6a6a6a;border-radius:4px"></div>
<div class="abs" style="left:137px;top:534px;width:6px;height:6px;border-radius:3px;background:#e8e8e8"></div><div class="abs" style="left:167px;top:534px;width:6px;height:6px;border-radius:3px;background:#e8e8e8"></div><div class="abs" style="left:197px;top:534px;width:6px;height:6px;border-radius:3px;background:#e8e8e8"></div><div class="abs" style="left:227px;top:534px;width:6px;height:6px;border-radius:3px;background:#e8e8e8"></div><div class="abs" style="left:257px;top:534px;width:6px;height:6px;border-radius:3px;background:#e8e8e8"></div>
<div class="abs" style="left:0;top:554px;width:400px;height:30px;border:2px solid #3c3c3c;border-radius:6px"></div>
<span class="t" style="left:0;top:554px;width:400px;height:30px;line-height:29px;text-align:center;font-size:22.5px;color:#c8c8c8;letter-spacing:0.45px">AA9R7744.cr2</span>
<svg style="left:412px;top:332px" width="1847" height="1230" viewBox="0 0 1847 1230"><use href="#ph" width="1847" height="1230"/></svg>
<div class="abs" style="left:412px;top:1562px;width:1848px;height:36px;border:2px solid #484848;background:#1d1d1d"></div>
<span class="t" style="left:426px;top:1563px;height:34px;line-height:35px;font-size:23.5px;color:#dadada">ISO 100</span><span class="t" style="left:538px;top:1563px;height:34px;line-height:35px;font-size:23.5px;color:#dadada;letter-spacing:0.35px">1/125 Í</span><span class="t" style="left:638px;top:1563px;height:34px;line-height:35px;font-size:23.5px;color:#dadada;letter-spacing:1px">f/16</span><span class="t" style="left:706px;top:1563px;height:34px;line-height:35px;font-size:23.5px;color:#dadada;letter-spacing:0.5px">85 mm</span>
<span class="t" style="left:1235px;width:200px;text-align:center;top:1559px;height:34px;line-height:34px;font-size:22.5px;letter-spacing:0.4px;color:#dadada">AA9R7744.cr2</span>
<div class="abs" style="left:2052px;top:1569px;width:20px;height:21px;border:2px solid #8a8a8a;border-radius:4px"></div>
<div class="abs" style="left:2092px;top:1578px;width:6px;height:6px;border-radius:3px;background:#e0e0e0"></div><div class="abs" style="left:2118px;top:1578px;width:6px;height:6px;border-radius:3px;background:#e0e0e0"></div><div class="abs" style="left:2144px;top:1578px;width:6px;height:6px;border-radius:3px;background:#e0e0e0"></div><div class="abs" style="left:2170px;top:1578px;width:6px;height:6px;border-radius:3px;background:#e0e0e0"></div><div class="abs" style="left:2196px;top:1578px;width:6px;height:6px;border-radius:3px;background:#e0e0e0"></div>
<svg style="left:2226px;top:1570px" width="21" height="18" viewBox="0 0 21 18"><rect x="1" y="1" width="19" height="16" fill="none" stroke="#b0b0b0" stroke-width="1.8"/><path stroke="#b0b0b0" stroke-width="1.8" d="M4 5.5h13M4 9h13M4 12.5h13"/></svg>
<svg style="left:2291px;top:144px" width="33" height="26" viewBox="0 0 33 26"><path fill="none" stroke="#f58a1a" stroke-width="3" stroke-linejoin="round" d="M3.7 1.5H13.5l4.7 5.2H29.3c1.2 0 2 .8 2 2V22.5c0 1.2-.8 2-2 2H3.7c-1.2 0-2-.8-2-2V3.5c0-1.2.8-2 2-2z"/></svg>
<svg style="left:2346px;top:141px" width="32" height="27" viewBox="0 0 32 27"><path fill="none" stroke="#a0a0a4" stroke-width="3" d="M1.5 5.5h29v20h-29z"/><path fill="none" stroke="#a0a0a4" stroke-width="2.6" d="M10.5 5V1.5h11V5"/><circle cx="16" cy="15.2" r="5.7" fill="none" stroke="#a0a0a4" stroke-width="3"/></svg>
<svg style="left:2398px;top:140px" width="36" height="32" viewBox="0 0 36 32"><g fill="none" stroke="#a0a0a4" stroke-width="3"><circle cx="18" cy="10.2" r="8.6"/><circle cx="10.3" cy="22" r="8.6"/><circle cx="25.6" cy="22" r="8.6"/></g></svg>
<svg style="left:2454px;top:142px" width="32" height="28" viewBox="0 0 32 28"><path fill="none" stroke="#a0a0a4" stroke-width="3" stroke-linejoin="miter" d="M1.5 26.5V11.5c5 2.5 11-1 17.5-9.5l2.5 5.5 3-1.5 2 4.5 4-2.5V26.5z"/></svg>
<svg style="left:2517px;top:141px" width="15" height="30" viewBox="0 0 15 30"><path fill="none" stroke="#a0a0a4" stroke-width="2.6" d="M7.5 1.5c6.5 8 6.5 19 0 27c-6.5-8-6.5-19 0-27z"/></svg>
<svg style="left:2562px;top:140px" width="32" height="32" viewBox="0 0 32 32"><path fill="none" stroke="#a0a0a4" stroke-width="3" d="M7.5 0V24.5H32M0 7.5H24.5V32"/></svg>
<svg style="left:2616px;top:139px" width="33" height="33" viewBox="0 0 33 33"><circle cx="18" cy="14.8" r="11.9" fill="none" stroke="#a0a0a4" stroke-width="4"/><path stroke="#a0a0a4" stroke-width="5" d="M10 23L2 31"/></svg>
<svg style="left:2671px;top:141px" width="30" height="29" viewBox="0 0 30 29"><path fill="#a0a0a4" d="M23.5 0L29.8 6.8 22.5 12.5 17.2 7z"/><path fill="#a0a0a4" d="M16.3 8l5.2 5.5c-.5 5-3 9-6.5 11.5-4.5 3.2-9.8 4-15 3.3 3.5-1 5-3 5.5-6.5.8-5.5 3.5-10.5 10.8-13.8z"/></svg>
<svg style="left:2726px;top:142px" width="29" height="27" viewBox="0 0 29 27"><rect x="1.5" y="1.5" width="26" height="24" fill="none" stroke="#a0a0a4" stroke-width="3"/><path stroke="#a0a0a4" stroke-width="2.8" d="M6 7.7h17M6 13.5h17M6 19.3h17"/></svg>
<svg style="left:2779px;top:141px" width="32" height="32" viewBox="0 0 32 32"><circle cx="16" cy="15.5" r="13.7" fill="none" stroke="#a0a0a4" stroke-width="3"/></svg><span class="t" style="left:2778px;top:140px;width:32px;height:31px;line-height:31px;text-align:center;font:italic bold 28px 'Liberation Serif',serif;color:#a0a0a4;transform:scaleX(1.3)">i</span>
<svg style="left:2851px;top:149px" width="18" height="14" viewBox="0 0 18 14"><path fill="none" stroke="#a0a0a4" stroke-width="2.6" d="M1 1l7 6-7 6M9.5 1l7 6-7 6"/></svg>
<div class="abs" style="left:2276px;top:182px;width:130px;height:2px;background:linear-gradient(90deg,rgba(245,138,26,0),#f58a1a 18%,#f58a1a 45%,rgba(245,138,26,0))"></div><svg style="left:2301px;top:175px" width="14" height="9" viewBox="0 0 14 9"><path fill="#1f1f1f" stroke="#f58a1a" stroke-width="1.8" d="M0 8.5L7 1.2 14 8.5"/></svg>
<svg style="left:2290px;top:193px" width="16" height="14" viewBox="0 0 16 14"><path fill="#8c8c8c" d="M0 0h16L8 14z"/></svg><span class="t" style="left:2317px;top:183px;height:34px;line-height:34px;font-size:19.2px;font-weight:bold;color:#b4b4b4;letter-spacing:0;text-shadow:0 1px 1px #000">라이브러리</span><span class="t" style="left:2817px;top:183px;height:34px;line-height:34px;font-size:24px;font-weight:bold;color:#8c8c8c">?</span><div class="abs" style="left:2849px;top:195px;width:4px;height:4px;background:#8c8c8c"></div><div class="abs" style="left:2855.5px;top:195px;width:4px;height:4px;background:#8c8c8c"></div><div class="abs" style="left:2862px;top:195px;width:4px;height:4px;background:#8c8c8c"></div>
<div class="abs" style="left:2290px;top:234px;width:515px;height:32px;border:2px solid #484848;border-radius:8px"></div><span class="t" style="left:2307px;top:235.5px;height:32px;line-height:31px;font-size:19.8px;font-weight:bold;color:#f2f2f2;letter-spacing:-0.5px">세션: 나름찍는다</span><svg style="left:2777px;top:239px" width="14" height="22" viewBox="0 0 14 22"><path fill="#b8b8b8" d="M7 0l6.5 8.5h-13zM7 22L.5 13.5h13z"/></svg>
<div class="abs" style="left:2820px;top:234px;width:44px;height:32px;border:2px solid #484848;border-radius:8px"></div><svg style="left:2832px;top:240px" width="26" height="22" viewBox="0 0 26 22"><path fill="#c4c4c4" d="M8 0h3.6v8H19.6v3.6H11.6v8H8v-8H0V8h8z"/><path fill="#c4c4c4" d="M17 17h8l-4 4.5z"/></svg>
<div class="abs" style="left:2272px;top:282px;width:608px;height:680px;overflow:hidden">
<div class="abs" style="left:18px;top:256px;width:574px;height:38px;background:linear-gradient(#fb8e14,#f08308 55%,#e07a06)"></div>
<svg style="left:76px;top:-12px" width="10" height="15" viewBox="0 0 10 15"><path fill="#b4b4b4" d="M0 0l10 7.5L0 15z"/></svg><svg style="left:113px;top:-16px" width="30" height="24" viewBox="0 0 30 24"><path fill="url(#gf)" d="M0 2c0-1.2.8-2 2-2h6.5c1 0 1.5.3 2.2 1.2L12.3 3H28c1.2 0 2 .8 2 2V22c0 1.2-.8 2-2 2H2c-1.2 0-2-.8-2-2z"/><path fill="none" stroke="#bcbcbc" stroke-width="1" d="M.5 5.5h29"/><rect x="8" y="9" width="14" height="11" fill="none" stroke="#9a9a9a" stroke-width="1.3"/><circle cx="15" cy="14.5" r="3" fill="none" stroke="#9a9a9a" stroke-width="1.3"/></svg><span class="t" style="left:156px;top:-21px;height:36px;line-height:36px;font-size:21.2px;letter-spacing:-0.2px;word-spacing:0;color:#cfcfcf">그림</span>
<svg style="left:113px;top:24px" width="30" height="24" viewBox="0 0 30 24"><path fill="url(#gf)" d="M0 2c0-1.2.8-2 2-2h6.5c1 0 1.5.3 2.2 1.2L12.3 3H28c1.2 0 2 .8 2 2V22c0 1.2-.8 2-2 2H2c-1.2 0-2-.8-2-2z"/><path fill="none" stroke="#bcbcbc" stroke-width="1" d="M.5 5.5h29"/><circle cx="15" cy="14.5" r="6.6" fill="#a6a6a6"/><path fill="#d6d6d6" d="M13 9.5h4v4.5h3.2L15 19.5 9.8 14h3.2z"/></svg><span class="t" style="left:156px;top:19px;height:36px;line-height:36px;font-size:21.2px;letter-spacing:-0.2px;word-spacing:0;color:#cfcfcf">다운로드</span>
<svg style="left:74.5px;top:70.5px" width="15" height="10" viewBox="0 0 15 10"><path fill="#b4b4b4" d="M0 0h15L7.5 10z"/></svg><svg style="left:113px;top:64px" width="30" height="24" viewBox="0 0 30 24"><path fill="url(#gf)" d="M0 2c0-1.2.8-2 2-2h6.5c1 0 1.5.3 2.2 1.2L12.3 3H28c1.2 0 2 .8 2 2V22c0 1.2-.8 2-2 2H2c-1.2 0-2-.8-2-2z"/><path fill="none" stroke="#bcbcbc" stroke-width="1" d="M.5 5.5h29"/><rect x="7.5" y="9.5" width="15" height="11" fill="none" stroke="#9a9a9a" stroke-width="1.3"/><path stroke="#9a9a9a" stroke-width="1.3" d="M7.5 12.5h15"/></svg><span class="t" style="left:156px;top:59px;height:36px;line-height:36px;font-size:21.2px;letter-spacing:-0.2px;word-spacing:0;color:#cfcfcf">데스크탑</span>
<svg style="left:155px;top:104px" width="30" height="24" viewBox="0 0 30 24"><path fill="url(#gf)" d="M0 2c0-1.2.8-2 2-2h6.5c1 0 1.5.3 2.2 1.2L12.3 3H28c1.2 0 2 .8 2 2V22c0 1.2-.8 2-2 2H2c-1.2 0-2-.8-2-2z"/><path fill="none" stroke="#bcbcbc" stroke-width="1" d="M.5 5.5h29"/></svg><span class="t" style="left:198px;top:99px;height:36px;line-height:36px;font-size:21.2px;letter-spacing:-0.2px;word-spacing:0;color:#cfcfcf">무제 폴더</span>
<svg style="left:155px;top:144px" width="30" height="24" viewBox="0 0 30 24"><path fill="url(#gf)" d="M0 2c0-1.2.8-2 2-2h6.5c1 0 1.5.3 2.2 1.2L12.3 3H28c1.2 0 2 .8 2 2V22c0 1.2-.8 2-2 2H2c-1.2 0-2-.8-2-2z"/><path fill="none" stroke="#bcbcbc" stroke-width="1" d="M.5 5.5h29"/></svg><span class="t" style="left:198px;top:139px;height:36px;line-height:36px;font-size:21.2px;letter-spacing:-0.2px;word-spacing:0;color:#cfcfcf">와이프</span>
<svg style="left:118px;top:188px" width="10" height="15" viewBox="0 0 10 15"><path fill="#b4b4b4" d="M0 0l10 7.5L0 15z"/></svg><svg style="left:155px;top:184px" width="30" height="24" viewBox="0 0 30 24"><path fill="url(#gf)" d="M0 2c0-1.2.8-2 2-2h6.5c1 0 1.5.3 2.2 1.2L12.3 3H28c1.2 0 2 .8 2 2V22c0 1.2-.8 2-2 2H2c-1.2 0-2-.8-2-2z"/><path fill="none" stroke="#bcbcbc" stroke-width="1" d="M.5 5.5h29"/></svg><span class="t" style="left:198px;top:179px;height:36px;line-height:36px;font-size:21.2px;letter-spacing:-0.2px;word-spacing:0;color:#cfcfcf">와이프 프로필</span>
<svg style="left:155px;top:224px" width="30" height="24" viewBox="0 0 30 24"><path fill="url(#gf)" d="M0 2c0-1.2.8-2 2-2h6.5c1 0 1.5.3 2.2 1.2L12.3 3H28c1.2 0 2 .8 2 2V22c0 1.2-.8 2-2 2H2c-1.2 0-2-.8-2-2z"/><path fill="none" stroke="#bcbcbc" stroke-width="1" d="M.5 5.5h29"/></svg><span class="t" style="left:198px;top:219px;height:36px;line-height:36px;font-size:21.2px;letter-spacing:-0.2px;word-spacing:0;color:#cfcfcf">원본</span>
<svg style="left:155px;top:264px" width="30" height="24" viewBox="0 0 30 24"><path fill="url(#gf)" d="M0 2c0-1.2.8-2 2-2h6.5c1 0 1.5.3 2.2 1.2L12.3 3H28c1.2 0 2 .8 2 2V22c0 1.2-.8 2-2 2H2c-1.2 0-2-.8-2-2z"/><path fill="none" stroke="#bcbcbc" stroke-width="1" d="M.5 5.5h29"/></svg><span class="t" style="left:198px;top:259px;height:36px;line-height:36px;font-size:21.2px;letter-spacing:-0.2px;word-spacing:0;color:#000">유지아</span>
<svg style="left:155px;top:304px" width="30" height="24" viewBox="0 0 30 24"><path fill="url(#gf)" d="M0 2c0-1.2.8-2 2-2h6.5c1 0 1.5.3 2.2 1.2L12.3 3H28c1.2 0 2 .8 2 2V22c0 1.2-.8 2-2 2H2c-1.2 0-2-.8-2-2z"/><path fill="none" stroke="#bcbcbc" stroke-width="1" d="M.5 5.5h29"/></svg><span class="t" style="left:198px;top:299px;height:36px;line-height:36px;font-size:21.2px;letter-spacing:-0.2px;word-spacing:0;color:#cfcfcf">음악</span>
<svg style="left:155px;top:344px" width="30" height="24" viewBox="0 0 30 24"><path fill="url(#gf)" d="M0 2c0-1.2.8-2 2-2h6.5c1 0 1.5.3 2.2 1.2L12.3 3H28c1.2 0 2 .8 2 2V22c0 1.2-.8 2-2 2H2c-1.2 0-2-.8-2-2z"/><path fill="none" stroke="#bcbcbc" stroke-width="1" d="M.5 5.5h29"/></svg><span class="t" style="left:198px;top:339px;height:36px;line-height:36px;font-size:21.2px;letter-spacing:-0.2px;word-spacing:0;color:#cfcfcf">중앙대 창작사진</span>
<svg style="left:118px;top:388px" width="10" height="15" viewBox="0 0 10 15"><path fill="#b4b4b4" d="M0 0l10 7.5L0 15z"/></svg><svg style="left:155px;top:384px" width="30" height="24" viewBox="0 0 30 24"><path fill="url(#gf)" d="M0 2c0-1.2.8-2 2-2h6.5c1 0 1.5.3 2.2 1.2L12.3 3H28c1.2 0 2 .8 2 2V22c0 1.2-.8 2-2 2H2c-1.2 0-2-.8-2-2z"/><path fill="none" stroke="#bcbcbc" stroke-width="1" d="M.5 5.5h29"/></svg><span class="t" style="left:198px;top:379px;height:36px;line-height:36px;font-size:21.2px;letter-spacing:-0.2px;word-spacing:0;color:#cfcfcf">처음부터</span>
<svg style="left:155px;top:424px" width="30" height="24" viewBox="0 0 30 24"><path fill="url(#gf)" d="M0 2c0-1.2.8-2 2-2h6.5c1 0 1.5.3 2.2 1.2L12.3 3H28c1.2 0 2 .8 2 2V22c0 1.2-.8 2-2 2H2c-1.2 0-2-.8-2-2z"/><path fill="none" stroke="#bcbcbc" stroke-width="1" d="M.5 5.5h29"/></svg><span class="t" style="left:198px;top:419px;height:36px;line-height:36px;font-size:21.2px;letter-spacing:-0.2px;word-spacing:0;color:#cfcfcf">혜원</span>
<svg style="left:118px;top:468px" width="10" height="15" viewBox="0 0 10 15"><path fill="#b4b4b4" d="M0 0l10 7.5L0 15z"/></svg><svg style="left:155px;top:464px" width="30" height="24" viewBox="0 0 30 24"><path fill="url(#gf)" d="M0 2c0-1.2.8-2 2-2h6.5c1 0 1.5.3 2.2 1.2L12.3 3H28c1.2 0 2 .8 2 2V22c0 1.2-.8 2-2 2H2c-1.2 0-2-.8-2-2z"/><path fill="none" stroke="#bcbcbc" stroke-width="1" d="M.5 5.5h29"/></svg><span class="t" style="left:198px;top:459px;height:36px;line-height:36px;font-size:23px;letter-spacing:0.3px;word-spacing:0;color:#cfcfcf">atma</span>
<svg style="left:118px;top:508px" width="10" height="15" viewBox="0 0 10 15"><path fill="#b4b4b4" d="M0 0l10 7.5L0 15z"/></svg><svg style="left:155px;top:504px" width="30" height="24" viewBox="0 0 30 24"><path fill="url(#gf)" d="M0 2c0-1.2.8-2 2-2h6.5c1 0 1.5.3 2.2 1.2L12.3 3H28c1.2 0 2 .8 2 2V22c0 1.2-.8 2-2 2H2c-1.2 0-2-.8-2-2z"/><path fill="none" stroke="#bcbcbc" stroke-width="1" d="M.5 5.5h29"/></svg><span class="t" style="left:198px;top:499px;height:36px;line-height:36px;font-size:23px;letter-spacing:0;word-spacing:0;color:#cfcfcf">ETC</span>
<svg style="left:76px;top:548px" width="10" height="15" viewBox="0 0 10 15"><path fill="#b4b4b4" d="M0 0l10 7.5L0 15z"/></svg><svg style="left:113px;top:544px" width="30" height="24" viewBox="0 0 30 24"><path fill="url(#gf)" d="M0 2c0-1.2.8-2 2-2h6.5c1 0 1.5.3 2.2 1.2L12.3 3H28c1.2 0 2 .8 2 2V22c0 1.2-.8 2-2 2H2c-1.2 0-2-.8-2-2z"/><path fill="none" stroke="#bcbcbc" stroke-width="1" d="M.5 5.5h29"/><path fill="none" stroke="#9a9a9a" stroke-width="1.3" d="M10 8.5h6l4 4V21H10zM16 8.5v4h4"/></svg><span class="t" style="left:156px;top:539px;height:36px;line-height:36px;font-size:21.2px;letter-spacing:-0.2px;word-spacing:0;color:#cfcfcf">도큐멘트</span>
<svg style="left:76px;top:588px" width="10" height="15" viewBox="0 0 10 15"><path fill="#b4b4b4" d="M0 0l10 7.5L0 15z"/></svg><svg style="left:113px;top:584px" width="30" height="24" viewBox="0 0 30 24"><path fill="url(#gf)" d="M0 2c0-1.2.8-2 2-2h6.5c1 0 1.5.3 2.2 1.2L12.3 3H28c1.2 0 2 .8 2 2V22c0 1.2-.8 2-2 2H2c-1.2 0-2-.8-2-2z"/><path fill="none" stroke="#bcbcbc" stroke-width="1" d="M.5 5.5h29"/><rect x="9" y="8.5" width="12" height="12.5" fill="none" stroke="#9a9a9a" stroke-width="1.3"/><path stroke="#9a9a9a" stroke-width="1.2" d="M12 8.5V21M18 8.5V21M9 11.5h3M9 14.7h12M9 18h3M18 11.5h3M18 18h3"/></svg><span class="t" style="left:156px;top:579px;height:36px;line-height:36px;font-size:21.2px;letter-spacing:-0.2px;word-spacing:0;color:#cfcfcf">동영상</span>
<svg style="left:76px;top:628px" width="10" height="15" viewBox="0 0 10 15"><path fill="#b4b4b4" d="M0 0l10 7.5L0 15z"/></svg><svg style="left:113px;top:624px" width="30" height="24" viewBox="0 0 30 24"><path fill="url(#gf)" d="M0 2c0-1.2.8-2 2-2h6.5c1 0 1.5.3 2.2 1.2L12.3 3H28c1.2 0 2 .8 2 2V22c0 1.2-.8 2-2 2H2c-1.2 0-2-.8-2-2z"/><path fill="none" stroke="#bcbcbc" stroke-width="1" d="M.5 5.5h29"/><path fill="#9a9a9a" d="M15 8l7 4H8zM9 19.5h12V21H9zM10 13h1.6v6H10zM13 13h1.6v6H13zM15.8 13h1.6v6h-1.6zM18.6 13h1.6v6h-1.6z"/></svg><span class="t" style="left:156px;top:619px;height:36px;line-height:36px;font-size:21.2px;letter-spacing:-0.2px;word-spacing:0;color:#cfcfcf">라이브러리</span>
</div>
<div class="abs" style="left:2554px;top:492px;width:324px;height:44px;background:#d9d9d9"></div><span class="t" style="left:2565px;top:490px;height:40px;line-height:40px;font-size:23px;color:#000;letter-spacing:0.45px">/Users/ATMA/Desktop/<span style="font-size:21px;letter-spacing:-0.3px">와이프</span></span>
<div class="hl" style="left:2272px;top:963px;width:608px"></div>
<svg style="left:2290px;top:975px" width="16" height="14" viewBox="0 0 16 14"><path fill="#8c8c8c" d="M0 0h16L8 14z"/></svg><span class="t" style="left:2317px;top:965px;height:34px;line-height:34px;font-size:19.2px;font-weight:bold;color:#b4b4b4;letter-spacing:0;text-shadow:0 1px 1px #000">필터</span><span class="t" style="left:2817px;top:965px;height:34px;line-height:34px;font-size:24px;font-weight:bold;color:#8c8c8c">?</span><div class="abs" style="left:2849px;top:977px;width:4px;height:4px;background:#8c8c8c"></div><div class="abs" style="left:2855.5px;top:977px;width:4px;height:4px;background:#8c8c8c"></div><div class="abs" style="left:2862px;top:977px;width:4px;height:4px;background:#8c8c8c"></div>
<div class="abs" style="left:2290px;top:1018px;width:574px;height:39px;border:2px solid #5c5c5c;border-radius:19.5px;background:#000"></div><div class="abs" style="left:2826px;top:1021px;width:1px;height:33px;background:#4a4a4a"></div><svg style="left:2298px;top:1026px" width="34" height="23" viewBox="0 0 34 23"><circle cx="9.5" cy="9.5" r="7.3" fill="none" stroke="#f2f2f2" stroke-width="3"/><path stroke="#f2f2f2" stroke-width="4" stroke-linecap="round" d="M15 15l5.5 6"/><path fill="#f2f2f2" d="M23 10h9.5l-4.7 4.5z"/></svg><span class="t" style="left:2345px;top:1020px;height:36px;line-height:36px;font-size:21.2px;color:#8c8c8c;letter-spacing:-0.2px">검색</span><div class="abs" style="left:2835px;top:1036px;width:4px;height:4px;background:#f0f0f0"></div><div class="abs" style="left:2841px;top:1036px;width:4px;height:4px;background:#f0f0f0"></div><div class="abs" style="left:2847px;top:1036px;width:4px;height:4px;background:#f0f0f0"></div>
<div class="abs" style="left:2290px;top:1076px;width:574px;height:1px;background:#484848"></div>
<svg style="left:2305px;top:1088px" width="15" height="10.5" viewBox="0 0 15 10.5"><path fill="#f0f0f0" d="M0 0h15L7.5 10.5z"/></svg><span class="t" style="left:2326px;top:1076px;height:36px;line-height:36px;font-size:21.2px;color:#d2d2d2;letter-spacing:-0.2px">등급</span>
<span class="t" style="left:2344px;top:1114.5px;height:36px;line-height:36px;font-size:21.2px;color:#d2d2d2;letter-spacing:-0.2px">없음</span><div class="abs" style="left:2787px;top:1118.7px;width:59px;height:29px;border-radius:14.5px;background:#4c4a4b"></div><div class="abs" style="left:2820px;top:1122.2px;width:22px;height:22px;border-radius:11px;background:#1f1f1f"></div><span class="t" style="left:2793px;width:23px;text-align:right;top:1117.2px;height:30px;line-height:30px;font-family:'DejaVu Sans',sans-serif;font-size:22.5px;color:#cdcdcd">2</span>
<span class="t" style="left:2343px;top:1152.5px;height:36px;line-height:36px;font-family:'DejaVu Sans',sans-serif;font-size:23.5px;color:#c8c8c8;letter-spacing:-1.6px">★</span><div class="abs" style="left:2787px;top:1156.7px;width:59px;height:29px;border-radius:14.5px;background:#4c4a4b"></div><div class="abs" style="left:2820px;top:1160.2px;width:22px;height:22px;border-radius:11px;background:#1f1f1f"></div><span class="t" style="left:2793px;width:23px;text-align:right;top:1155.2px;height:30px;line-height:30px;font-family:'DejaVu Sans',sans-serif;font-size:22.5px;color:#cdcdcd">0</span>
<span class="t" style="left:2343px;top:1190.5px;height:36px;line-height:36px;font-family:'DejaVu Sans',sans-serif;font-size:23.5px;color:#c8c8c8;letter-spacing:-1.6px">★★</span><div class="abs" style="left:2787px;top:1194.7px;width:59px;height:29px;border-radius:14.5px;background:#4c4a4b"></div><div class="abs" style="left:2820px;top:1198.2px;width:22px;height:22px;border-radius:11px;background:#1f1f1f"></div><span class="t" style="left:2793px;width:23px;text-align:right;top:1193.2px;height:30px;line-height:30px;font-family:'DejaVu Sans',sans-serif;font-size:22.5px;color:#cdcdcd">0</span>
<span class="t" style="left:2343px;top:1228.5px;height:36px;line-height:36px;font-family:'DejaVu Sans',sans-serif;font-size:23.5px;color:#c8c8c8;letter-spacing:-1.6px">★★★</span><div class="abs" style="left:2787px;top:1232.7px;width:59px;height:29px;border-radius:14.5px;background:#4c4a4b"></div><div class="abs" style="left:2820px;top:1236.2px;width:22px;height:22px;border-radius:11px;background:#1f1f1f"></div><span class="t" style="left:2793px;width:23px;text-align:right;top:1231.2px;height:30px;line-height:30px;font-family:'DejaVu Sans',sans-serif;font-size:22.5px;color:#cdcdcd">0</span>
<span class="t" style="left:2343px;top:1266.5px;height:36px;line-height:36px;font-family:'DejaVu Sans',sans-serif;font-size:23.5px;color:#c8c8c8;letter-spacing:-1.6px">★★★★</span><div class="abs" style="left:2787px;top:1270.7px;width:59px;height:29px;border-radius:14.5px;background:#4c4a4b"></div><div class="abs" style="left:2820px;top:1274.2px;width:22px;height:22px;border-radius:11px;background:#1f1f1f"></div><span class="t" style="left:2793px;width:23px;text-align:right;top:1269.2px;height:30px;line-height:30px;font-family:'DejaVu Sans',sans-serif;font-size:22.5px;color:#cdcdcd">0</span>
<span class="t" style="left:2343px;top:1304.5px;height:36px;line-height:36px;font-family:'DejaVu Sans',sans-serif;font-size:23.5px;color:#c8c8c8;letter-spacing:-1.6px">★★★★★</span><div class="abs" style="left:2787px;top:1308.7px;width:59px;height:29px;border-radius:14.5px;background:#4c4a4b"></div><div class="abs" style="left:2820px;top:1312.2px;width:22px;height:22px;border-radius:11px;background:#1f1f1f"></div><span class="t" style="left:2793px;width:23px;text-align:right;top:1307.2px;height:30px;line-height:30px;font-family:'DejaVu Sans',sans-serif;font-size:22.5px;color:#cdcdcd">0</span>
<div class="abs" style="left:2290px;top:1342px;width:574px;height:1px;background:#484848"></div>
<svg style="left:2305px;top:1353.5px" width="15" height="10.5" viewBox="0 0 15 10.5"><path fill="#f0f0f0" d="M0 0h15L7.5 10.5z"/></svg><span class="t" style="left:2326px;top:1341.5px;height:36px;line-height:36px;font-size:21.2px;color:#d2d2d2;letter-spacing:-0.2px">컬러 태그</span>
<div class="abs" style="left:2344px;top:1384.2px;width:28px;height:28px;border:2px solid #a0a0a0;border-radius:4px"></div><span class="t" style="left:2379px;top:1381.2px;height:36px;line-height:36px;font-size:21.2px;color:#d2d2d2;letter-spacing:-0.2px">없음</span><div class="abs" style="left:2787px;top:1384.4px;width:59px;height:29px;border-radius:14.5px;background:#4c4a4b"></div><div class="abs" style="left:2820px;top:1387.9px;width:22px;height:22px;border-radius:11px;background:#1f1f1f"></div><span class="t" style="left:2793px;width:23px;text-align:right;top:1382.9px;height:30px;line-height:30px;font-family:'DejaVu Sans',sans-serif;font-size:22.5px;color:#cdcdcd">2</span>
<div class="abs" style="left:2344px;top:1422.2px;width:28px;height:28px;border-radius:4px;background:linear-gradient(#ff2a0a,#d81c04)"></div><span class="t" style="left:2379px;top:1419.2px;height:36px;line-height:36px;font-size:21.2px;color:#d2d2d2;letter-spacing:-0.2px">레드</span><div class="abs" style="left:2787px;top:1422.4px;width:59px;height:29px;border-radius:14.5px;background:#4c4a4b"></div><div class="abs" style="left:2820px;top:1425.9px;width:22px;height:22px;border-radius:11px;background:#1f1f1f"></div><span class="t" style="left:2793px;width:23px;text-align:right;top:1420.9px;height:30px;line-height:30px;font-family:'DejaVu Sans',sans-serif;font-size:22.5px;color:#cdcdcd">0</span>
<div class="abs" style="left:2344px;top:1460.2px;width:28px;height:28px;border-radius:4px;background:linear-gradient(#ffa30a,#dc7e04)"></div><span class="t" style="left:2379px;top:1457.2px;height:36px;line-height:36px;font-size:21.2px;color:#d2d2d2;letter-spacing:-0.2px">오렌지</span><div class="abs" style="left:2787px;top:1460.4px;width:59px;height:29px;border-radius:14.5px;background:#4c4a4b"></div><div class="abs" style="left:2820px;top:1463.9px;width:22px;height:22px;border-radius:11px;background:#1f1f1f"></div><span class="t" style="left:2793px;width:23px;text-align:right;top:1458.9px;height:30px;line-height:30px;font-family:'DejaVu Sans',sans-serif;font-size:22.5px;color:#cdcdcd">0</span>
<div class="abs" style="left:2344px;top:1498.2px;width:28px;height:28px;border-radius:4px;background:linear-gradient(#ffff0a,#d4d404)"></div><span class="t" style="left:2379px;top:1495.2px;height:36px;line-height:36px;font-size:21.2px;color:#d2d2d2;letter-spacing:-0.2px">옐로우</span><div class="abs" style="left:2787px;top:1498.4px;width:59px;height:29px;border-radius:14.5px;background:#4c4a4b"></div><div class="abs" style="left:2820px;top:1501.9px;width:22px;height:22px;border-radius:11px;background:#1f1f1f"></div><span class="t" style="left:2793px;width:23px;text-align:right;top:1496.9px;height:30px;line-height:30px;font-family:'DejaVu Sans',sans-serif;font-size:22.5px;color:#cdcdcd">0</span>
<div class="abs" style="left:2344px;top:1536.2px;width:28px;height:28px;border-radius:4px;background:linear-gradient(#0af20a,#04c804)"></div><span class="t" style="left:2379px;top:1533.2px;height:36px;line-height:36px;font-size:21.2px;color:#d2d2d2;letter-spacing:-0.2px">그린</span><div class="abs" style="left:2787px;top:1536.4px;width:59px;height:29px;border-radius:14.5px;background:#4c4a4b"></div><div class="abs" style="left:2820px;top:1539.9px;width:22px;height:22px;border-radius:11px;background:#1f1f1f"></div><span class="t" style="left:2793px;width:23px;text-align:right;top:1534.9px;height:30px;line-height:30px;font-family:'DejaVu Sans',sans-serif;font-size:22.5px;color:#cdcdcd">0</span>
<div class="abs" style="left:2344px;top:1574.2px;width:28px;height:28px;border-radius:4px;background:linear-gradient(#0aa8ff,#0480d8)"></div><span class="t" style="left:2379px;top:1571.2px;height:36px;line-height:36px;font-size:21.2px;color:#d2d2d2;letter-spacing:-0.2px">블루</span><div class="abs" style="left:2787px;top:1574.4px;width:59px;height:29px;border-radius:14.5px;background:#4c4a4b"></div><div class="abs" style="left:2820px;top:1577.9px;width:22px;height:22px;border-radius:11px;background:#1f1f1f"></div><span class="t" style="left:2793px;width:23px;text-align:right;top:1572.9px;height:30px;line-height:30px;font-family:'DejaVu Sans',sans-serif;font-size:22.5px;color:#cdcdcd">0</span>
<div class="abs" style="left:2344px;top:1612.2px;width:28px;height:28px;border-radius:4px;background:linear-gradient(#ff46ff,#d42cd4)"></div><span class="t" style="left:2379px;top:1609.2px;height:36px;line-height:36px;font-size:21.2px;color:#d2d2d2;letter-spacing:-0.2px">핑크</span><div class="abs" style="left:2787px;top:1612.4px;width:59px;height:29px;border-radius:14.5px;background:#4c4a4b"></div><div class="abs" style="left:2820px;top:1615.9px;width:22px;height:22px;border-radius:11px;background:#1f1f1f"></div><span class="t" style="left:2793px;width:23px;text-align:right;top:1610.9px;height:30px;line-height:30px;font-family:'DejaVu Sans',sans-serif;font-size:22.5px;color:#cdcdcd">0</span>
<div class="abs" style="left:2344px;top:1650.2px;width:28px;height:28px;border-radius:4px;background:linear-gradient(#a83cff,#7c28d4)"></div><span class="t" style="left:2379px;top:1647.2px;height:36px;line-height:36px;font-size:21.2px;color:#d2d2d2;letter-spacing:-0.2px">보라색</span><div class="abs" style="left:2787px;top:1650.4px;width:59px;height:29px;border-radius:14.5px;background:#4c4a4b"></div><div class="abs" style="left:2820px;top:1653.9px;width:22px;height:22px;border-radius:11px;background:#1f1f1f"></div><span class="t" style="left:2793px;width:23px;text-align:right;top:1648.9px;height:30px;line-height:30px;font-family:'DejaVu Sans',sans-serif;font-size:22.5px;color:#cdcdcd">0</span>
<div class="abs" style="left:2290px;top:1684px;width:574px;height:1px;background:#484848"></div>
<svg style="left:2305px;top:1696px" width="15" height="10.5" viewBox="0 0 15 10.5"><path fill="#f0f0f0" d="M0 0h15L7.5 10.5z"/></svg><span class="t" style="left:2326px;top:1684px;height:36px;line-height:36px;font-size:21.2px;color:#d2d2d2;letter-spacing:-0.2px">날짜</span>
</div>
</body></html>
